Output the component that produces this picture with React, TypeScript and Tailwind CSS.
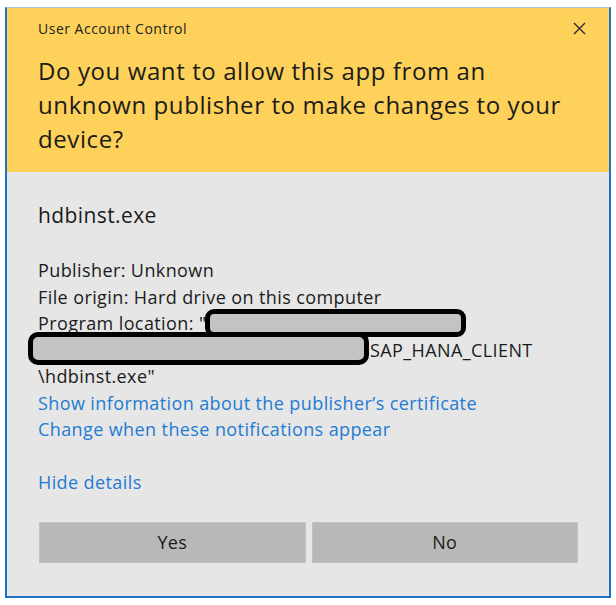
import React from "react";

export default function App() {
  return (
    <div
      className="relative w-[616px] h-[605px] bg-white overflow-hidden"
      style={{ fontFamily: '"Open Sans", "Noto Sans", sans-serif' }}
    >
      <div className="absolute left-[5px] top-[7px] w-[606px] h-[591px] border-2 border-[#1a73c6] border-t border-t-[#a9c4de] flex flex-col">
        {/* Header */}
        <div className="h-[164px] bg-[#fdd15a] pl-[31px] pr-[23px] pt-[11.6px] text-[#1b1b1b]">
          <div className="flex items-center justify-between h-[18px]">
            <div className="text-[14px] leading-[18px] tracking-[0.5px] text-[#222]">User Account Control</div>
            <svg width="13" height="13" viewBox="0 0 13 13">
              <path d="M1 1 L12 12 M12 1 L1 12" stroke="#2a2a2a" strokeWidth="1.4" fill="none" />
            </svg>
          </div>
          <div className="mt-[16px] text-[24px] leading-[34px] tracking-[0.6px] whitespace-nowrap">
            Do you want to allow this app from an
            <br />
            unknown publisher to make changes to your
            <br />
            device?
          </div>
        </div>

        {/* Body */}
        <div className="flex-1 bg-[#e6e6e6] pl-[31px] pt-[29px] text-[#1b1b1b]">
          <div className="text-[21px] leading-[28px] tracking-[0.4px]">hdbinst.exe</div>
          <div className="mt-[28px] text-[18px] leading-[26.5px] tracking-[0.4px] whitespace-nowrap">
            <div>Publisher: Unknown</div>
            <div>File origin: Hard drive on this computer</div>
            <div>Program location: &quot;</div>
            <div className="pl-[332px]">SAP_HANA_CLIENT</div>
            <div>\hdbinst.exe&quot;</div>
            <div className="text-[#1f7bd3]">Show information about the publisher’s certificate</div>
            <div className="text-[#1f7bd3]">Change when these notifications appear</div>
          </div>
          <div className="mt-[26.5px] text-[18px] leading-[26.5px] tracking-[0.4px] text-[#1f7bd3]">Hide details</div>
          <div className="mt-[26.7px] ml-px w-[539px] grid grid-cols-2 gap-[6px]">
            <div className="h-[41px] bg-[#b8b8b8] border border-[#c2c2c2] flex items-center justify-center text-[18px] tracking-[0.3px]">
              Yes
            </div>
            <div className="h-[41px] bg-[#b8b8b8] border border-[#c2c2c2] flex items-center justify-center text-[18px] tracking-[0.3px]">
              No
            </div>
          </div>
        </div>
      </div>

      {/* Redaction overlays */}
      <div className="absolute left-[205px] top-[309px] w-[261px] h-[28px] rounded-[9px] border-[5px] border-black bg-[#c3c3c3]" />
      <div className="absolute left-[28px] top-[332px] w-[341px] h-[33px] rounded-[10px] border-[5px] border-black bg-[#c3c3c3]" />
    </div>
  );
}
